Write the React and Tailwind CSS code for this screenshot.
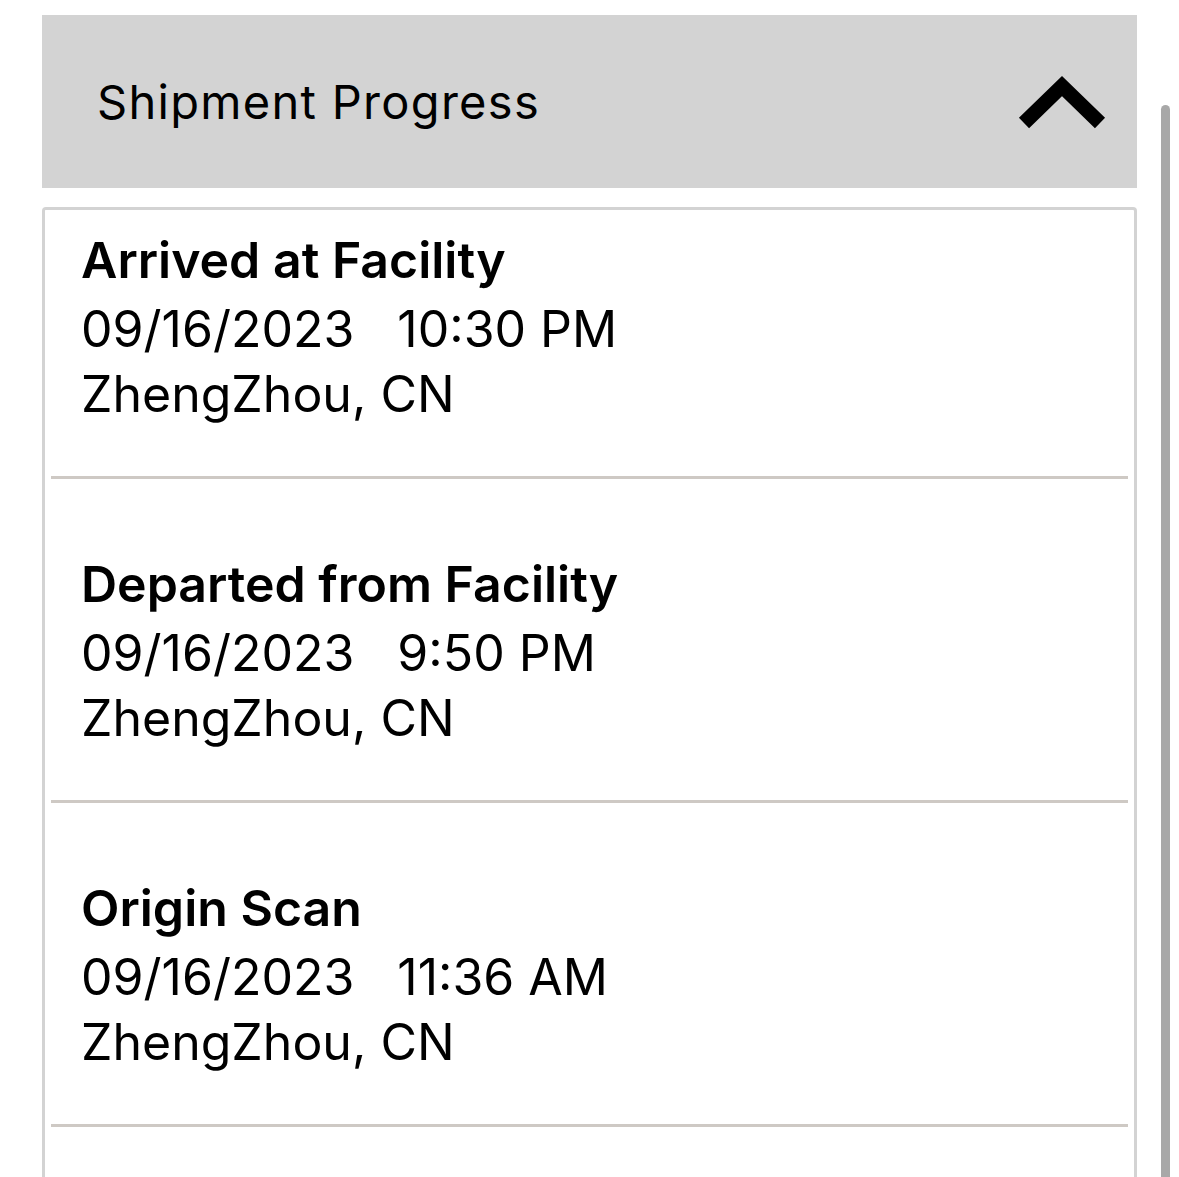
import React from "react";

const events = [
  { title: "Arrived at Facility", date: "09/16/2023", time: "10:30 PM", place: "ZhengZhou, CN" },
  { title: "Departed from Facility", date: "09/16/2023", time: "9:50 PM", place: "ZhengZhou, CN" },
  { title: "Origin Scan", date: "09/16/2023", time: "11:36 AM", place: "ZhengZhou, CN" },
];

function ChevronUp() {
  return (
    <svg width="100" height="70" viewBox="0 0 100 70" className="block">
      <polyline
        points="12,58 50,21 88,58"
        fill="none"
        stroke="#000"
        strokeWidth="14.5"
        strokeLinejoin="miter"
        strokeLinecap="butt"
      />
    </svg>
  );
}

export default function App() {
  return (
    <div
      className="relative w-[1179px] h-[1177px] overflow-hidden bg-white text-black"
      style={{ fontFamily: "Inter, 'Noto Sans', sans-serif" }}
    >
      <div className="pt-[15px] pl-[42px] w-[1137px]">
        <div className="h-[173px] bg-[#d3d3d3] flex items-center justify-between pl-[55px] pr-[25px]">
          <span className="text-[47px] leading-none tracking-[1.3px]">Shipment Progress</span>
          <div className="mt-[-3px]">
            <ChevronUp />
          </div>
        </div>

        <div className="mt-[19px] border-[3px] border-b-0 border-[#d3d3d3] rounded-t-[4px] px-[6px]">
          {events.map((e, i) => (
            <div key={i}>
              <div className={`${i === 0 ? "pt-[18px]" : "pt-[73px]"} pb-[49px] pl-[30px] text-[50px] leading-[65px]`}>
                <div className="font-semibold">{e.title}</div>
                <div className="mt-[4px]">
                  {e.date}
                  <span className="ml-[43px]">{e.time}</span>
                </div>
                <div>{e.place}</div>
              </div>
              <div className="h-[3px] bg-[#cec9c4]" />
            </div>
          ))}
          <div className="h-[120px]" />
        </div>
      </div>

      {/* scroll indicator */}
      <div className="absolute left-[1161px] top-[105px] w-[9px] h-[1100px] rounded-t-full bg-[#a8a8a8]" />
    </div>
  );
}
